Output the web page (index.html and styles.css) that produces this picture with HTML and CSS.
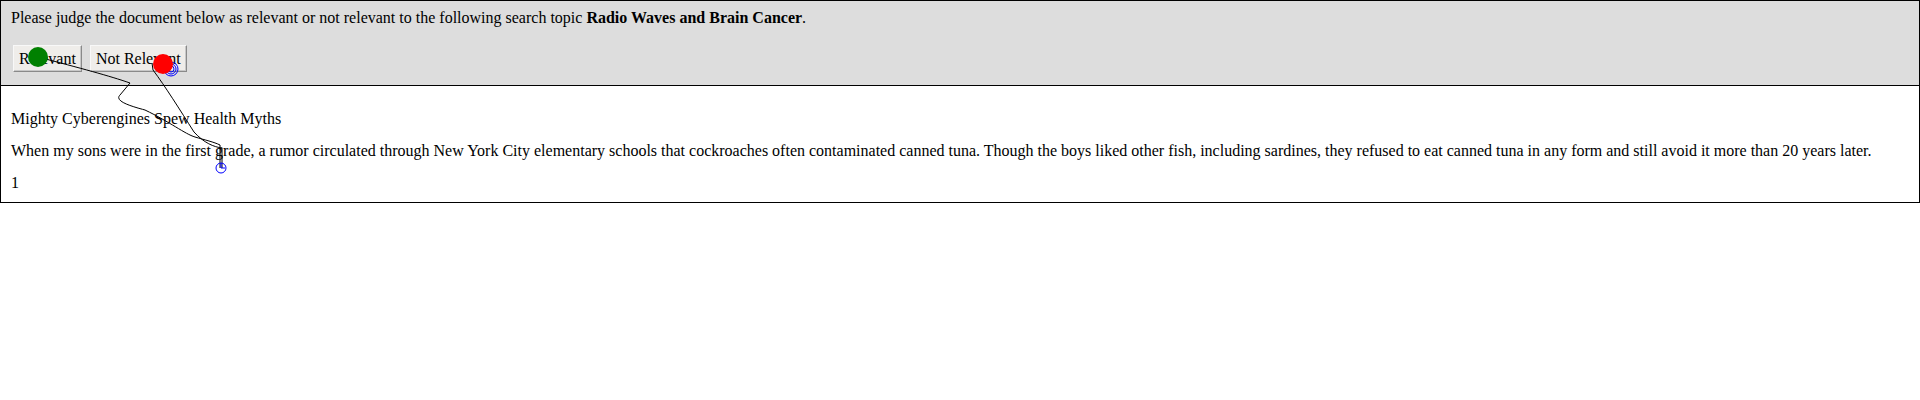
FILE: index.html
```html
<!DOCTYPE html>
<html>
<head>
<meta charset="utf-8">
<link rel="stylesheet" href="styles.css">
</head>
<body>
<div class="header">
  <p class="prompt">Please judge the document below as relevant or not relevant to the following search topic <b>Radio Waves and Brain Cancer</b>.</p>
  <div class="buttons">
    <button class="btn">Relevant</button>
    <button class="btn">Not Relevant</button>
  </div>
</div>
<div class="doc">
  <p class="title">Mighty Cyberengines Spew Health Myths</p>
  <p class="body-text">When my sons were in the first grade, a rumor circulated through New York City elementary schools that cockroaches often contaminated canned tuna. Though the boys liked other fish, including sardines, they refused to eat canned tuna in any form and still avoid it more than 20 years later.</p>
  <p class="num">1</p>
</div>
<svg class="trail" width="260" height="200" viewBox="0 0 260 200">
  <path d="M38,57 C80,68 110,76 130,83 L120,95 C114,101 130,106 145,110 C170,122 185,134 195,137 C205,140 214,142 220,145 L220,168" fill="none" stroke="#000" stroke-width="1"/>
  <path d="M152,63 L153,70 C165,86 180,110 194,132 C204,143 214,147 222,148 L222,168" fill="none" stroke="#000" stroke-width="1"/>
  <circle cx="38" cy="57" r="10" fill="#008000"/>
  <circle cx="171" cy="69" r="7" fill="none" stroke="#0000ff" stroke-width="1"/>
  <circle cx="171" cy="69" r="5" fill="none" stroke="#0000ff" stroke-width="1"/>
  <circle cx="171" cy="69" r="3" fill="none" stroke="#0000ff" stroke-width="1"/>
  <circle cx="163" cy="64" r="10" fill="#ff0000"/>
  <circle cx="221" cy="168" r="5" fill="none" stroke="#0000ff" stroke-width="1"/>
  <line x1="221" y1="168" x2="221" y2="163" stroke="#0000ff" stroke-width="1"/>
  <line x1="221" y1="168" x2="225" y2="168" stroke="#0000ff" stroke-width="1"/>
</svg>
</body>
</html>
```
FILE: styles.css
```css
html, body {
  margin: 0;
  padding: 0;
  background: #fff;
}
body {
  font-family: "Liberation Serif", "Times New Roman", serif;
  font-size: 16px;
  line-height: 18px;
  color: #000;
  position: relative;
}
.header {
  box-sizing: border-box;
  width: 1920px;
  background: #dddddd;
  border: 1px solid #000;
  padding: 8px 10px 13px 10px;
}
.prompt {
  margin: 0;
}
.buttons {
  display: flex;
  gap: 8px;
  margin-top: 18px;
  padding-left: 2px;
}
.btn {
  font-family: "Liberation Serif", "Times New Roman", serif;
  font-size: 16px;
  height: 27px;
  padding: 0 5px;
  margin: 0;
  background: #efedea;
  border: 1px solid;
  border-color: #f8f8f8 #8a8a8a #8a8a8a #f8f8f8;
  box-shadow: inset -1px -1px 0 #c8c8c8;
  color: #000;
}
.doc {
  box-sizing: border-box;
  width: 1920px;
  border: 1px solid #000;
  border-top: none;
  padding: 24px 8px 10px 10px;
}
.doc p {
  margin: 0;
}
.doc p + p {
  margin-top: 14px;
}
.trail {
  position: absolute;
  left: 0;
  top: 0;
  pointer-events: none;
}
```
